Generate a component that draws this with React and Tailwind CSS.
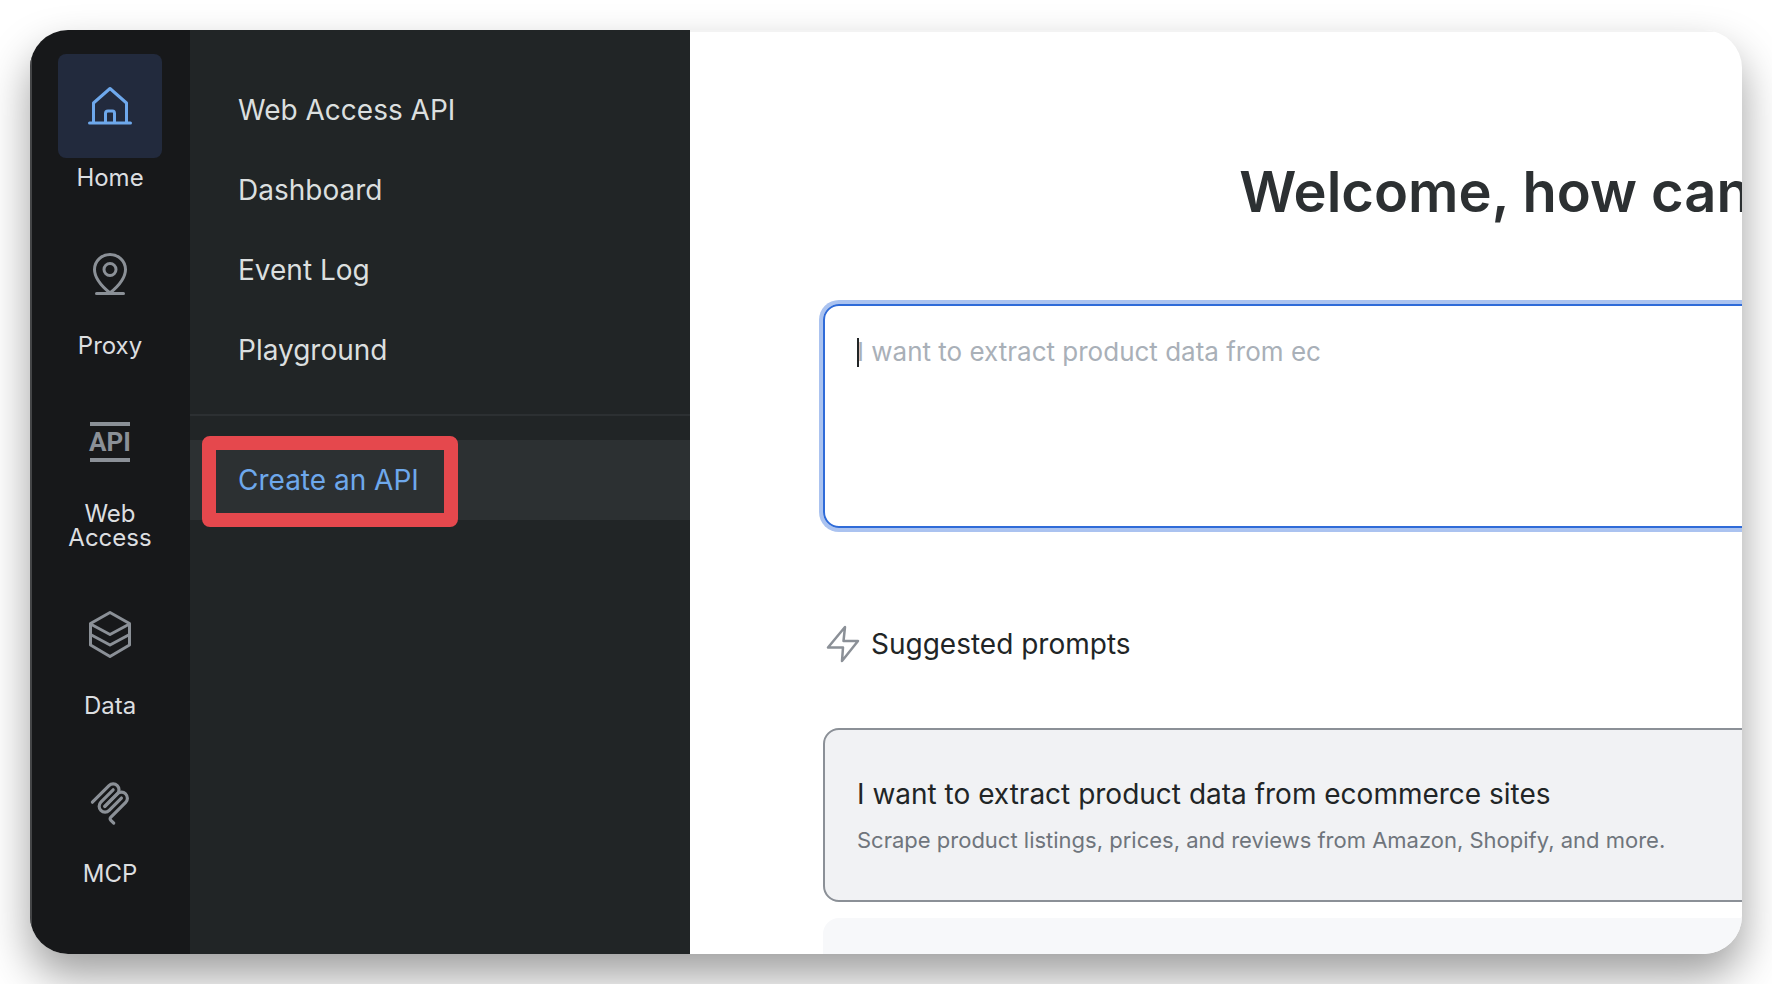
import React, { useState } from "react";

const HomeIcon = () => (
    <svg viewBox="0 0 48 48" className="w-12 h-12" fill="none" stroke="currentColor" strokeWidth="3" strokeLinecap="round" strokeLinejoin="round" aria-hidden="true">
        <path d="M3.5 41H44.5" />
        <path d="M7.5 40V21L24 6.5L40.5 21V40" />
        <path d="M19.5 40V31.5C19.5 30 20.5 29 22 29H26.5C28 29 28.5 30 28.5 31.5V40" />
    </svg>
);

const ProxyIcon = () => (
    <svg viewBox="0 0 48 48" className="w-12 h-12" fill="none" stroke="currentColor" strokeWidth="3" strokeLinecap="round" strokeLinejoin="round" aria-hidden="true">
        <path d="M10.5 43.5H37.5" />
        <path d="M24 43C16 36.5 8.5 28 8.5 19.5C8.5 11 15.5 4.5 24 4.5C32.5 4.5 39.5 11 39.5 19.5C39.5 28 32 36.5 24 43Z" />
        <circle cx="24" cy="19.5" r="6" />
    </svg>
);

const ApiIcon = () => (
    <span className="flex flex-col items-center justify-center w-10 h-10 border-y-4 border-current font-bold text-[26px] leading-none font-['Roboto',sans-serif]" aria-hidden="true">
        API
    </span>
);

const DataIcon = () => (
    <svg viewBox="0 0 48 48" className="w-12 h-12" fill="none" stroke="currentColor" strokeWidth="3" strokeLinejoin="round" aria-hidden="true">
        <path d="M24 2.5L43.5 13.5V35L24 46.5L4.5 35V13.5Z" />
        <path d="M4.5 14L24 24.5L43.5 14" />
        <path d="M4.5 24.5L24 35L43.5 24.5" />
    </svg>
);

const McpIcon = () => (
    <svg viewBox="0 -6 180 180" className="w-11 h-11 overflow-visible" fill="none" stroke="currentColor" strokeWidth="13" strokeLinecap="round" aria-hidden="true">
        <path d="M18 84.85L85.88 16.97C95.25 7.6 110.45 7.6 119.82 16.97C129.2 26.34 129.2 41.54 119.82 50.91L68.56 102.18" />
        <path d="M69.27 101.47L119.82 50.91C129.2 41.54 144.39 41.54 153.76 50.91L154.12 51.27C163.49 60.64 163.49 75.83 154.12 85.21L92.73 146.6C89.6 149.72 89.6 154.79 92.73 157.91L105.33 170.52" />
        <path d="M102.85 33.94L52.65 84.15C43.28 93.52 43.28 108.71 52.65 118.09C62.02 127.46 77.22 127.46 86.59 118.09L136.79 67.88" />
    </svg>
);

const BoltIcon = () => (
    <svg viewBox="0 0 36 40" className="w-9 h-10" fill="none" stroke="currentColor" strokeWidth="2.5" strokeLinejoin="round" aria-hidden="true">
        <path d="M20 3L3 23.5H18L17 37L33 17H18.5Z" />
    </svg>
);

const railItems = [
    { id: "home", label: "Home", icon: HomeIcon },
    { id: "proxy", label: "Proxy", icon: ProxyIcon },
    { id: "web-access", label: "Web Access", icon: ApiIcon },
    { id: "data", label: "Data", icon: DataIcon },
    { id: "mcp", label: "MCP", icon: McpIcon },
];

const menuItems = ["Web Access API", "Dashboard", "Event Log", "Playground"];

export default function App() {
    const [active, setActive] = useState("home");
    const [prompt, setPrompt] = useState("");

    return (
        <div className="min-h-screen bg-white p-[30px] flex font-['Inter',sans-serif]">
            <div className="flex flex-1 min-w-0 rounded-[38px] overflow-hidden bg-white shadow-[0_22px_44px_rgba(0,0,0,0.38)]">
                {/* Icon rail */}
                <nav aria-label="Products" className="w-40 shrink-0 bg-[#17181a] border-l-2 border-[#444547] pt-6 pr-0.5 flex flex-col items-center gap-8">
                    {railItems.map((item) => (
                        <button
                            key={item.id}
                            onClick={() => setActive(item.id)}
                            className="w-[104px] flex flex-col items-center gap-2 text-2xl leading-6 text-[#dcdee0]"
                        >
                            <span
                                className={`w-[104px] h-[104px] rounded-lg flex items-center justify-center ${active === item.id
                                    ? "bg-[#222a3d] text-[#6ea8ec]"
                                    : "text-[#8b9097]"
                                    }`}
                            >
                                <item.icon />
                            </span>
                            {item.label}
                        </button>
                    ))}
                </nav>

                {/* Submenu */}
                <nav aria-label="Web Access" className="w-[500px] shrink-0 bg-[#212526] pt-10 text-[28px] leading-10 text-[#dbdfdf]">
                    {menuItems.map((label) => (
                        <a key={label} href="#" className="flex items-center h-20 px-12">
                            {label}
                        </a>
                    ))}
                    <hr className="my-6 border-t-2 border-[#2c3032]" />
                    <a href="#" className="relative flex items-center h-20 px-12 bg-[#2c3032] text-[#6ea8ec]">
                        Create an API
                        <span className="absolute -top-1 left-3 w-64 h-[91px] rounded-lg border-[14px] border-[#e5484d]" />
                    </a>
                </nav>

                {/* Prompt area, wider than the window and clipped on the right */}
                <main className="flex-1 min-w-0 overflow-hidden border-t-2 border-[#f3f3f3] pt-32 pl-[133px]">
                    <div className="w-[1344px] flex flex-col">
                        <h1 className="text-center text-[56px] leading-[64px] font-semibold text-[#2c3032]">
                            Welcome, how can
                        </h1>

                        <div className="relative mt-20">
                            <textarea
                                aria-label="Prompt"
                                value={prompt}
                                onChange={(e) => setPrompt(e.target.value)}
                                placeholder="I want to extract product data from ec"
                                className="block w-full h-56 resize-none rounded-2xl border-2 border-[#2f6bd8] px-8 py-7 text-[26px] leading-9 text-[#212526] placeholder:text-[#a9b0b8] outline-none ring-4 ring-[#abc3f0]"
                            />
                            <span className="absolute left-[34px] top-[34px] w-0.5 h-[29px] bg-[#212526]" />
                        </div>

                        <h2 className="mt-24 flex items-center gap-2.5 pl-0.5 h-10 text-[28px] leading-10 text-[#212526]">
                            <span className="text-[#8b9097]">
                                <BoltIcon />
                            </span>
                            Suggested prompts
                        </h2>

                        <button className="mt-16 rounded-2xl border-2 border-[#8b9097] bg-[#f1f2f4] px-8 py-11 text-left">
                            <span className="block text-[28px] leading-10 text-[#212526]">
                                I want to extract product data from ecommerce sites
                            </span>
                            <span className="block mt-2.5 text-[22px] leading-8 text-[#6f757c]">
                                Scrape product listings, prices, and reviews from Amazon, Shopify, and more.
                            </span>
                        </button>
                        <div className="mt-4 h-9 rounded-t-2xl bg-[#f7f8fa]" />
                    </div>
                </main>
            </div>
        </div>
    );
}
